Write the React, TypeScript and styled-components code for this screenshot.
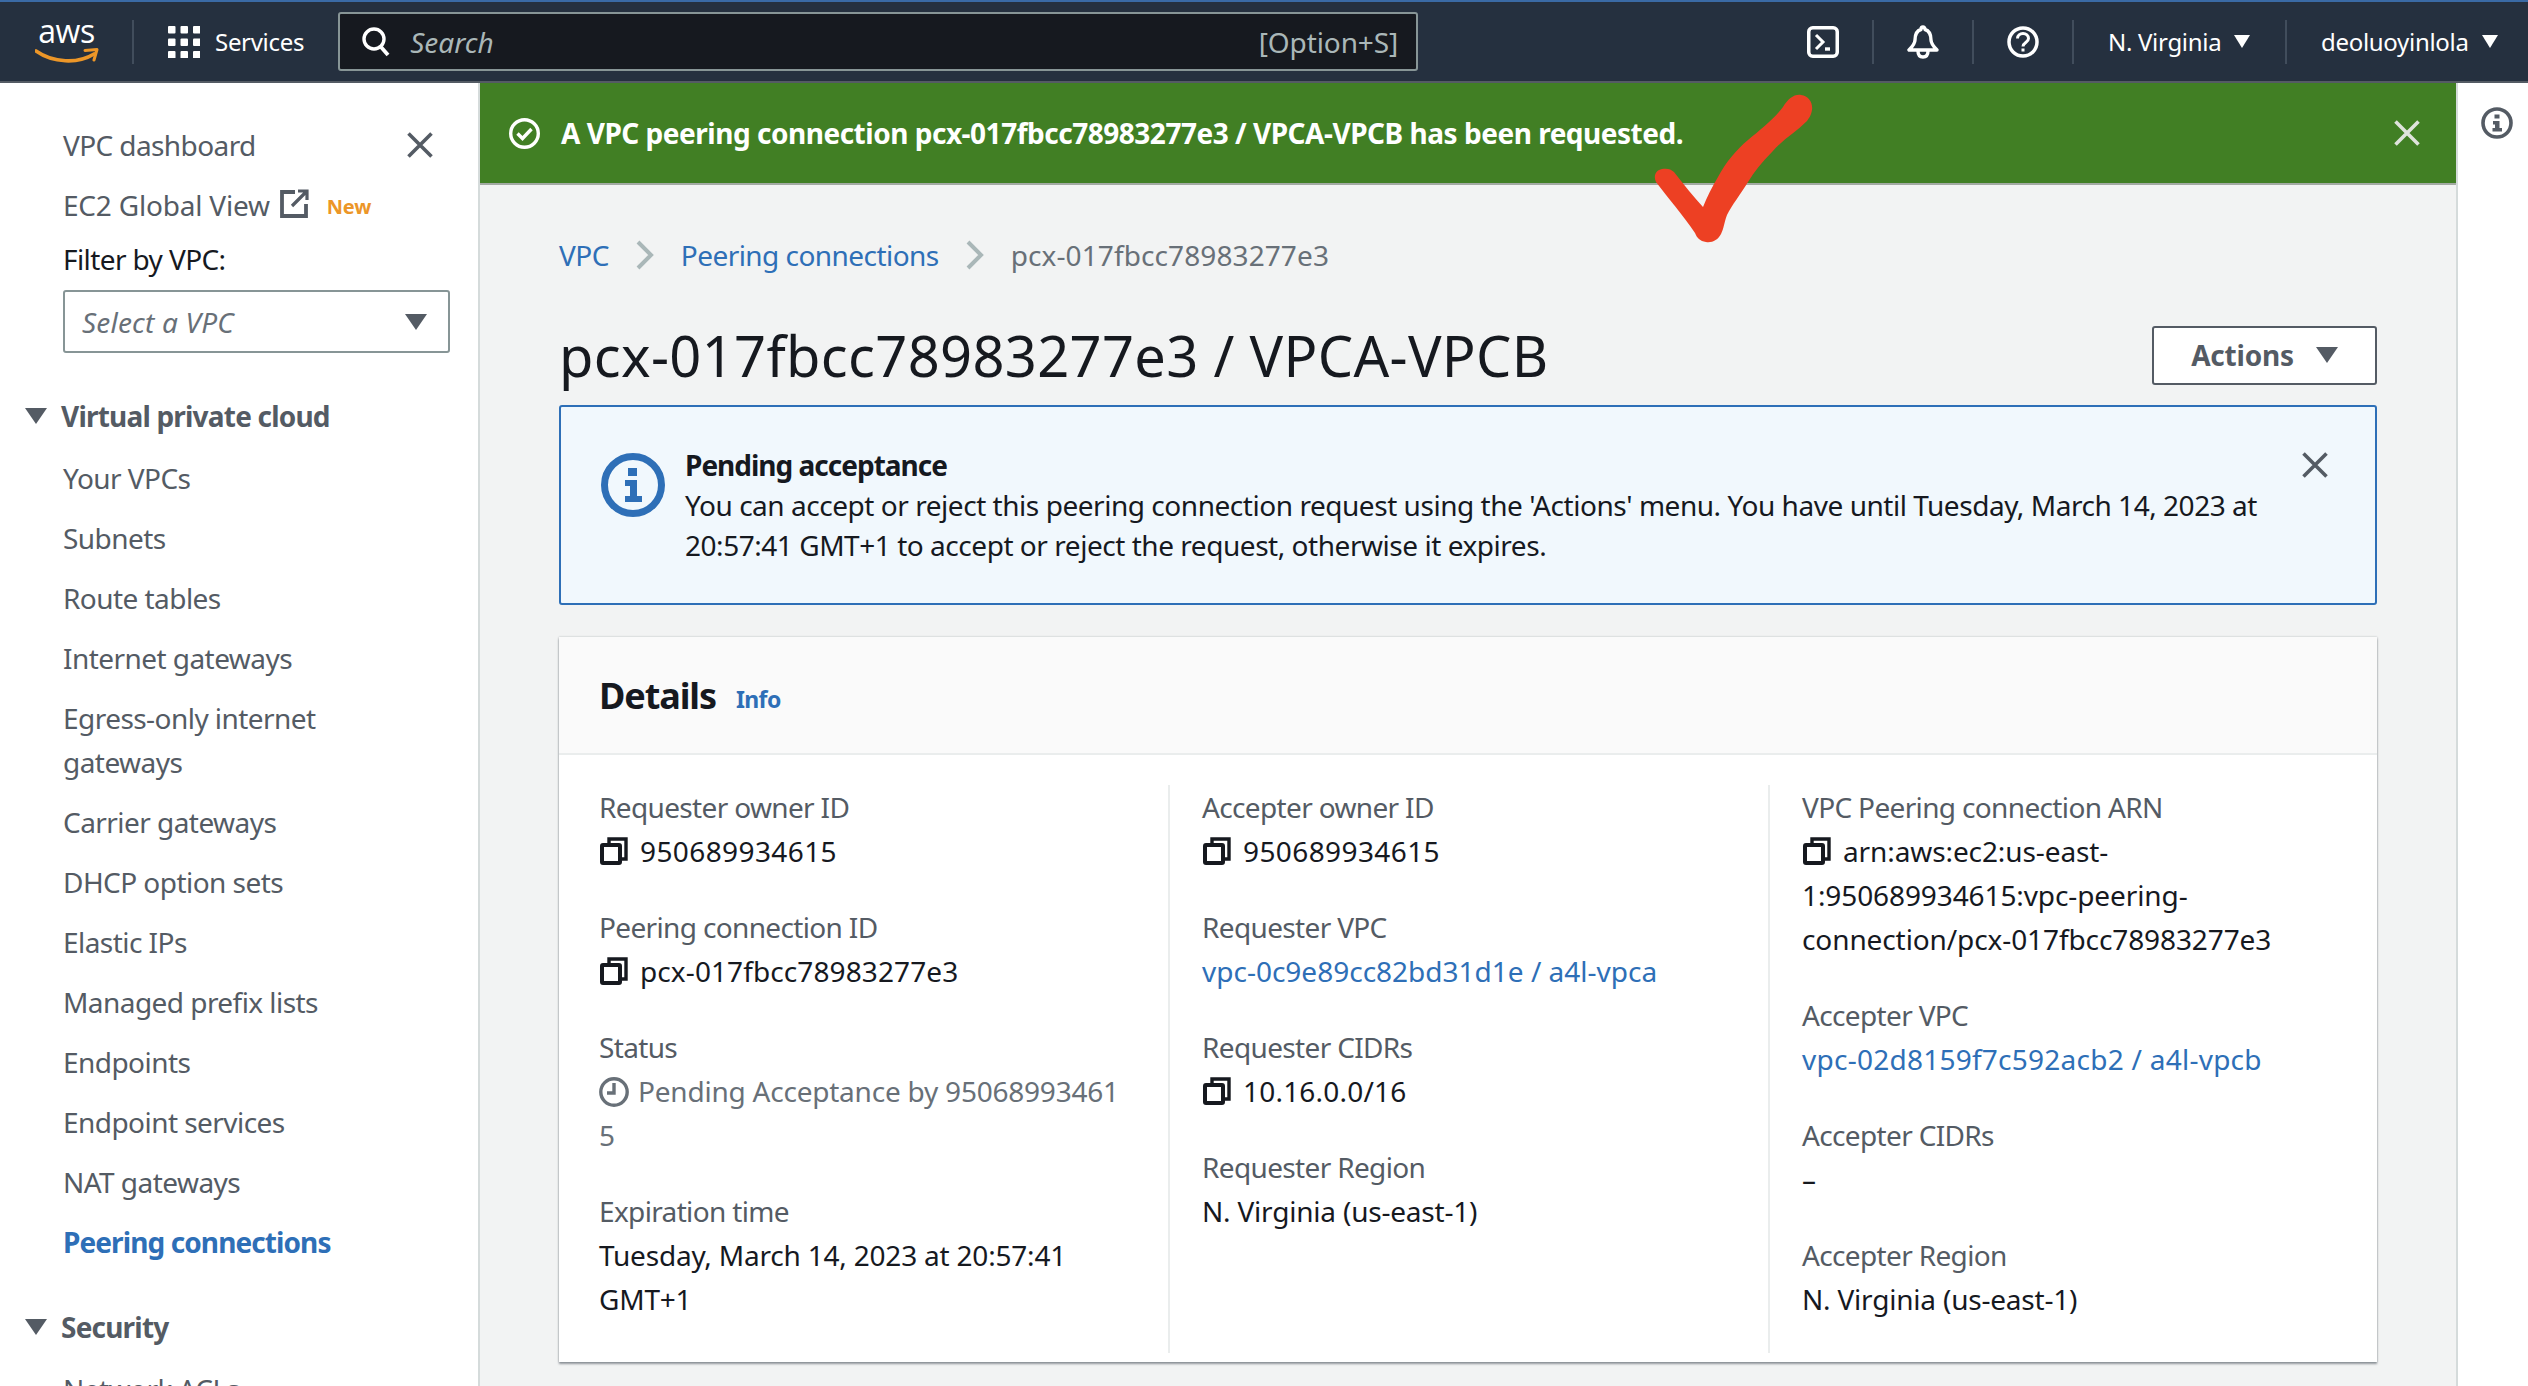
import React from "react";
import styled, { createGlobalStyle } from "styled-components";

const Global = createGlobalStyle`
  html, body { margin: 0; padding: 0; background: #fff; }
  body { font-family: "Noto Sans", "Open Sans", sans-serif; font-size: 28px; line-height: 44px; color: #16191f; letter-spacing: -0.6px; }
  * { box-sizing: border-box; }
`;

const Page = styled.div`
  position: relative;
  width: 2528px;
  height: 1386px;
  overflow: hidden;
  display: flex;
  flex-direction: column;
`;

const Header = styled.header`
  height: 83px;
  flex: none;
  display: flex;
  align-items: center;
  background: #25303f;
  border-top: 2px solid #3a6aa5;
  border-bottom: 2px solid #545b64;
  padding-left: 35px;
  color: #fff;
`;
const Logo = styled.div`
  width: 63px;
  height: 56px;
  flex: none;
  display: flex;
  flex-direction: column;
  align-items: center;
`;
const LogoWord = styled.span`
  font-family: "Open Sans", sans-serif;
  font-size: 32px;
  line-height: 34px;
  letter-spacing: -0.5px;
`;
const HeaderRule = styled.div`
  width: 2px;
  height: 44px;
  flex: none;
  background: #414d5c;
  margin: 0 34px 0 34px;
`;
const ServicesLabel = styled.span`
  font-size: 24px;
  letter-spacing: -0.3px;
  margin: 0 34px 0 15px;
`;
const SearchBox = styled.div`
  width: 1080px;
  height: 59px;
  flex: none;
  background: #16191f;
  border: 2px solid #879596;
  border-radius: 3px;
  display: flex;
  align-items: center;
  padding: 0 18px 0 22px;
`;
const SearchHint = styled.span`
  font-style: italic;
  font-size: 28px;
  letter-spacing: 0;
  color: #aab7b8;
  margin-left: 20px;
  flex: 1;
`;
const SearchKey = styled.span`
  font-size: 28px;
  letter-spacing: -0.1px;
  color: #aab7b8;
`;
const HeaderRight = styled.div`
  margin-left: auto;
  display: flex;
  align-items: center;
  height: 44px;
`;
const IconCell = styled.div`
  width: 100px;
  height: 44px;
  display: flex;
  align-items: center;
  justify-content: center;
  border-right: 2px solid #414d5c;
`;
const MenuCell = styled.div<{ $w: number; $last?: boolean }>`
  width: ${(p) => p.$w}px;
  height: 44px;
  display: flex;
  align-items: center;
  padding-left: 34px;
  font-size: 24px;
  letter-spacing: -0.3px;
  border-right: ${(p) => (p.$last ? "none" : "2px solid #414d5c")};
`;
const HeaderCaret = styled.span`
  width: 0;
  height: 0;
  margin-left: 13px;
  border-left: 8px solid transparent;
  border-right: 8px solid transparent;
  border-top: 13px solid #fff;
`;

const Body = styled.div`
  flex: 1;
  display: flex;
  min-height: 0;
`;

const Sidebar = styled.nav`
  width: 480px;
  flex: none;
  background: #fff;
  border-right: 2px solid #d5dbdb;
  padding: 40px 0 0 63px;
  display: flex;
  flex-direction: column;
  overflow: hidden;
  color: #545b64;
`;
const TopRow = styled.div`
  display: flex;
  align-items: center;
  justify-content: space-between;
  padding-right: 45px;
`;
const GlobalRow = styled.div`
  display: flex;
  align-items: center;
  margin-top: 14px;
  letter-spacing: -0.2px;
`;
const NewTag = styled.span`
  color: #ec9628;
  font-size: 20px;
  font-weight: 700;
  margin: 4px 0 0 18px;
`;
const FilterLabel = styled.div`
  color: #16191f;
  margin-top: 8px;
`;
const VpcSelect = styled.div`
  width: 387px;
  height: 63px;
  flex: none;
  margin-top: 9px;
  background: #fff;
  border: 2px solid #879596;
  border-radius: 3px;
  display: flex;
  align-items: center;
  justify-content: space-between;
  padding: 0 21px 0 17px;
  font-style: italic;
  letter-spacing: 0.2px;
  color: #687078;
`;
const Caret = styled.span<{ $c?: string }>`
  width: 0;
  height: 0;
  flex: none;
  border-left: 11px solid transparent;
  border-right: 11px solid transparent;
  border-top: 16px solid ${(p) => p.$c ?? "#545b64"};
`;
const SectionTitle = styled.div<{ $mt: number }>`
  display: flex;
  align-items: center;
  margin: ${(p) => p.$mt}px 0 18px -38px;
  font-weight: 700;
  letter-spacing: -0.8px;
  gap: 14px;
`;
const NavItem = styled.div<{ $active?: boolean }>`
  margin-bottom: 16px;
  flex: none;
  color: ${(p) => (p.$active ? "#2e6fb7" : "#545b64")};
  font-weight: ${(p) => (p.$active ? 700 : 400)};
  letter-spacing: ${(p) => (p.$active ? "-0.9px" : "-0.55px")};
`;

const Main = styled.main`
  width: 1976px;
  flex: none;
  background: #f2f3f3;
  display: flex;
  flex-direction: column;
`;
const Flash = styled.div`
  height: 102px;
  flex: none;
  background: #417f24;
  color: #fff;
  font-weight: 700;
  letter-spacing: -0.48px;
  display: flex;
  align-items: center;
  padding: 0 36px 0 29px;
  border-bottom: 2px solid #a3aaa3;
`;
const FlashText = styled.span`
  margin-left: 21px;
  flex: 1;
`;
const Content = styled.div`
  padding: 48px 79px 0 79px;
  display: flex;
  flex-direction: column;
`;
const Crumbs = styled.div`
  display: flex;
  align-items: center;
  gap: 27px;
  color: #2e6fb7;
  letter-spacing: -0.55px;
`;
const CrumbCurrent = styled.span`
  color: #687078;
  letter-spacing: 0.1px;
`;
const TitleRow = styled.div`
  margin-top: 43px;
  height: 70px;
  display: flex;
  align-items: center;
  justify-content: space-between;
`;
const PageTitle = styled.h1`
  margin: 0;
  font-size: 56px;
  line-height: 70px;
  font-weight: 400;
  letter-spacing: 0.34px;
  color: #16191f;
`;
const ActionsButton = styled.div`
  width: 225px;
  height: 59px;
  background: #fff;
  border: 2px solid #545b64;
  border-radius: 3px;
  display: flex;
  align-items: center;
  justify-content: center;
  gap: 22px;
  font-weight: 700;
  letter-spacing: -0.2px;
  color: #545b64;
`;
const Alert = styled.section`
  margin-top: 15px;
  height: 200px;
  background: #f1f8fd;
  border: 2px solid #2e6fb7;
  border-radius: 3px;
  display: flex;
  align-items: flex-start;
  padding: 38px 47px 0 40px;
`;
const AlertIcon = styled.svg`
  margin-top: 8px;
  flex: none;
`;
const AlertBody = styled.div`
  margin-left: 20px;
  flex: 1;
  line-height: 40px;
  letter-spacing: -0.46px;
  white-space: nowrap;
`;
const AlertTitle = styled.div`
  font-weight: 700;
  letter-spacing: -1px;
`;
const AlertClose = styled.div`
  margin-top: 7px;
  display: flex;
`;
const Card = styled.section`
  margin-top: 32px;
  height: 725px;
  background: #fff;
  box-shadow: 0 2px 2px rgba(84, 91, 100, 0.6), 0 0 2px rgba(0, 28, 36, 0.25);
  display: flex;
  flex-direction: column;
`;
const CardHead = styled.div`
  height: 118px;
  flex: none;
  background: #fafafa;
  border-bottom: 2px solid #eaeded;
  display: flex;
  align-items: center;
  padding: 2px 0 0 40px;
  gap: 20px;
`;
const CardTitle = styled.h2`
  margin: 0;
  font-size: 36px;
  font-weight: 700;
  letter-spacing: -1.1px;
  color: #16191f;
`;
const InfoLink = styled.span`
  color: #2e6fb7;
  font-size: 23px;
  font-weight: 700;
  margin-top: 6px;
`;
const Columns = styled.div`
  display: grid;
  grid-template-columns: 609px 600px 1fr;
  margin-top: 30px;
  height: 536px;
`;
const Column = styled.div<{ $first?: boolean }>`
  padding-left: ${(p) => (p.$first ? 40 : 32)}px;
  border-left: ${(p) => (p.$first ? "none" : "2px solid #eaeded")};
`;
const Field = styled.div`
  margin-bottom: 32px;
`;
const FieldLabel = styled.div`
  color: #545b64;
  letter-spacing: -0.65px;
`;
const FieldValue = styled.div<{ $ls?: number }>`
  color: #16191f;
  white-space: nowrap;
  letter-spacing: ${(p) => p.$ls ?? -0.2}px;
`;
const FieldLink = styled.div<{ $ls?: number }>`
  color: #2e6fb7;
  letter-spacing: ${(p) => p.$ls ?? 0}px;
`;
const CopyGlyph = styled.svg`
  vertical-align: -3px;
  margin: 0 12px 0 1px;
`;
const StatusText = styled.div`
  color: #687078;
  white-space: nowrap;
  letter-spacing: -0.22px;
`;
const StatusGlyph = styled.svg`
  vertical-align: -5px;
  margin-right: 9px;
`;
const HelpRail = styled.aside`
  flex: 1;
  background: #fff;
  border-left: 2px solid #d5dbdb;
  display: flex;
  justify-content: center;
  padding: 24px 0 0 8px;
`;
const RedCheck = styled.svg`
  position: absolute;
  left: 1650px;
  top: 90px;
`;
const ExternalGlyph = styled.svg`
  margin-left: 10px;
  margin-top: -4px;
`;

const Close = ({ c = "#545b64", s = 26 }: { c?: string; s?: number }) => (
  <svg width={s} height={s} viewBox="0 0 26 26" fill="none">
    <path d="M1.500 1.500 24.500 24.500M24.500 1.500 1.500 24.500" stroke={c} strokeWidth="3.600" />
  </svg>
);
const Chevron = () => (
  <svg width="18" height="30" viewBox="0 0 18 30" fill="none">
    <path d="M2 2 15 15 2 28" stroke="#aab7b8" strokeWidth="4" />
  </svg>
);
const Copy = () => (
  <CopyGlyph width="28" height="28" viewBox="0 0 28 28" fill="none">
    <path d="M9 7V2h17v20h-6" stroke="#16191f" strokeWidth="3.400" />
    <rect x="2" y="8" width="18" height="18" stroke="#16191f" strokeWidth="4" rx="1" />
  </CopyGlyph>
);

const navItems = [
  "Your VPCs",
  "Subnets",
  "Route tables",
  "Internet gateways",
  "Egress-only internet gateways",
  "Carrier gateways",
  "DHCP option sets",
  "Elastic IPs",
  "Managed prefix lists",
  "Endpoints",
  "Endpoint services",
  "NAT gateways",
];

export default function App() {
  return (
    <Page>
      <Global />
      <Header>
        <Logo>
          <LogoWord>aws</LogoWord>
          <svg width="64" height="18" viewBox="0 0 64 18" fill="none">
            <path d="M1 3c17 12 42 13 58 3" stroke="#ec9628" strokeWidth="3.600" strokeLinecap="round" />
            <path d="M50 2.500 62 1.500 59 12" stroke="#ec9628" strokeWidth="3" strokeLinecap="round" strokeLinejoin="round" />
          </svg>
        </Logo>
        <HeaderRule />
        <svg width="32" height="32" viewBox="0 0 32 32" fill="#fff">
          {[0, 12.5, 25].flatMap((y) =>
            [0, 12.5, 25].map((x) => <rect key={`${x}-${y}`} x={x} y={y} width="7.500" height="7.500" rx="1" />)
          )}
        </svg>
        <ServicesLabel>Services</ServicesLabel>
        <SearchBox>
          <svg width="28" height="30" viewBox="0 0 28 30" fill="none">
            <circle cx="12" cy="12" r="10" stroke="#fff" strokeWidth="3.400" />
            <path d="M19 20l7 8" stroke="#fff" strokeWidth="3.800" />
          </svg>
          <SearchHint>Search</SearchHint>
          <SearchKey>[Option+S]</SearchKey>
        </SearchBox>
        <HeaderRight>
          <IconCell>
            <svg width="32" height="32" viewBox="0 0 32 32" fill="none">
              <rect x="1.750" y="1.750" width="28.500" height="28.500" rx="4" stroke="#fff" strokeWidth="3.500" />
              <path d="M9 9l7 7-7 7" stroke="#fff" strokeWidth="3" />
              <path d="M18 23h5" stroke="#fff" strokeWidth="3.400" />
            </svg>
          </IconCell>
          <IconCell>
            <svg width="32" height="34" viewBox="0 0 32 34" fill="none">
              <path d="M16 2c-1 0-2 1-2 2.500C9 6 8 10 8 15c0 4-3 7-6 10h28c-3-3-6-6-6-10 0-5-1-9-6-10.500C18 3 17 2 16 2Z" stroke="#fff" strokeWidth="3.400" strokeLinejoin="round" />
              <path d="M11 26c0 4 2 6 5 6s5-2 5-6" stroke="#fff" strokeWidth="3.400" />
            </svg>
          </IconCell>
          <IconCell>
            <svg width="32" height="32" viewBox="0 0 32 32" fill="none">
              <circle cx="16" cy="16" r="14" stroke="#fff" strokeWidth="3.500" />
              <path d="M10.500 12.500c0-3 2.500-5 5.500-5s5.500 2 5.500 5c0 4-5.500 4-5.500 8" stroke="#fff" strokeWidth="3" />
              <rect x="14.500" y="22.500" width="3" height="3" fill="#fff" />
            </svg>
          </IconCell>
          <MenuCell $w={213}>
            N. Virginia
            <HeaderCaret />
          </MenuCell>
          <MenuCell $w={241} $last>
            deoluoyinlola
            <HeaderCaret />
          </MenuCell>
        </HeaderRight>
      </Header>
      <Body>
        <Sidebar>
          <TopRow>
            VPC dashboard
            <Close />
          </TopRow>
          <GlobalRow>
            EC2 Global View
            <ExternalGlyph width="29" height="29" viewBox="0 0 29 29" fill="none">
              <path d="M15 3H2v24h24V15" stroke="#545b64" strokeWidth="3.800" />
              <path d="M18 2h9v9M27 2 12 17" stroke="#545b64" strokeWidth="3.200" />
            </ExternalGlyph>
            <NewTag>New</NewTag>
          </GlobalRow>
          <FilterLabel>Filter by VPC:</FilterLabel>
          <VpcSelect>
            Select a VPC
            <Caret />
          </VpcSelect>
          <SectionTitle $mt={41}>
            <Caret />
            Virtual private cloud
          </SectionTitle>
          {navItems.map((n) => (
            <NavItem key={n}>{n === "Egress-only internet gateways" ? <>Egress-only internet<br />gateways</> : n}</NavItem>
          ))}
          <NavItem $active>Peering connections</NavItem>
          <SectionTitle $mt={25}>
            <Caret />
            Security
          </SectionTitle>
          <NavItem>Network ACLs</NavItem>
        </Sidebar>
        <Main>
          <Flash>
            <svg width="31" height="31" viewBox="0 0 31 31" fill="none">
              <circle cx="15.500" cy="15.500" r="13.800" stroke="#fff" strokeWidth="3.400" />
              <path d="M8.500 15.500l5 5 9-9.500" stroke="#fff" strokeWidth="3.400" />
            </svg>
            <FlashText>A VPC peering connection pcx-017fbcc78983277e3 / VPCA-VPCB has been requested.</FlashText>
            <Close c="#dfe3dc" />
          </Flash>
          <Content>
            <Crumbs>
              <span>VPC</span>
              <Chevron />
              <span>Peering connections</span>
              <Chevron />
              <CrumbCurrent>pcx-017fbcc78983277e3</CrumbCurrent>
            </Crumbs>
            <TitleRow>
              <PageTitle>pcx-017fbcc78983277e3 / VPCA-VPCB</PageTitle>
              <ActionsButton>
                Actions
                <Caret />
              </ActionsButton>
            </TitleRow>
            <Alert>
              <AlertIcon width="64" height="64" viewBox="0 0 64 64" fill="none">
                <circle cx="32" cy="32" r="28.500" stroke="#2e6fb7" strokeWidth="7" />
                <rect x="27" y="15" width="9" height="8" fill="#2e6fb7" />
                <path d="M24 27h12v16h5v6H24v-6h5V33h-5Z" fill="#2e6fb7" />
              </AlertIcon>
              <AlertBody>
                <AlertTitle>Pending acceptance</AlertTitle>
                You can accept or reject this peering connection request using the 'Actions' menu. You have until Tuesday, March 14, 2023 at
                <br />
                20:57:41 GMT+1 to accept or reject the request, otherwise it expires.
              </AlertBody>
              <AlertClose>
                <Close />
              </AlertClose>
            </Alert>
            <Card>
              <CardHead>
                <CardTitle>Details</CardTitle>
                <InfoLink>Info</InfoLink>
              </CardHead>
              <Columns>
                <Column $first>
                  <Field>
                    <FieldLabel>Requester owner ID</FieldLabel>
                    <FieldValue $ls={0.4}><Copy />950689934615</FieldValue>
                  </Field>
                  <Field>
                    <FieldLabel>Peering connection ID</FieldLabel>
                    <FieldValue $ls={0.1}><Copy />pcx-017fbcc78983277e3</FieldValue>
                  </Field>
                  <Field>
                    <FieldLabel>Status</FieldLabel>
                    <StatusText>
                      <StatusGlyph width="30" height="30" viewBox="0 0 30 30" fill="none">
                        <circle cx="15" cy="15" r="13.200" stroke="#687078" strokeWidth="3.400" />
                        <path d="M15 6v10H8" stroke="#687078" strokeWidth="3.400" />
                      </StatusGlyph>
                      Pending Acceptance by 95068993461
                      <br />5
                    </StatusText>
                  </Field>
                  <Field>
                    <FieldLabel>Expiration time</FieldLabel>
                    <FieldValue>Tuesday, March 14, 2023 at 20:57:41<br />GMT+1</FieldValue>
                  </Field>
                </Column>
                <Column>
                  <Field>
                    <FieldLabel>Accepter owner ID</FieldLabel>
                    <FieldValue $ls={0.4}><Copy />950689934615</FieldValue>
                  </Field>
                  <Field>
                    <FieldLabel>Requester VPC</FieldLabel>
                    <FieldLink>vpc-0c9e89cc82bd31d1e / a4l-vpca</FieldLink>
                  </Field>
                  <Field>
                    <FieldLabel>Requester CIDRs</FieldLabel>
                    <FieldValue $ls={0.2}><Copy />10.16.0.0/16</FieldValue>
                  </Field>
                  <Field>
                    <FieldLabel>Requester Region</FieldLabel>
                    <FieldValue>N. Virginia (us-east-1)</FieldValue>
                  </Field>
                </Column>
                <Column>
                  <Field>
                    <FieldLabel>VPC Peering connection ARN</FieldLabel>
                    <FieldValue $ls={-0.1}>
                      <Copy />arn:aws:ec2:us-east-<br />1:950689934615:vpc-peering-<br />connection/pcx-017fbcc78983277e3
                    </FieldValue>
                  </Field>
                  <Field>
                    <FieldLabel>Accepter VPC</FieldLabel>
                    <FieldLink $ls={0.25}>vpc-02d8159f7c592acb2 / a4l-vpcb</FieldLink>
                  </Field>
                  <Field>
                    <FieldLabel>Accepter CIDRs</FieldLabel>
                    <FieldValue>–</FieldValue>
                  </Field>
                  <Field>
                    <FieldLabel>Accepter Region</FieldLabel>
                    <FieldValue>N. Virginia (us-east-1)</FieldValue>
                  </Field>
                </Column>
              </Columns>
            </Card>
          </Content>
        </Main>
        <HelpRail>
          <svg width="32" height="32" viewBox="0 0 32 32" fill="none">
            <circle cx="16" cy="16" r="14" stroke="#545b64" strokeWidth="3.600" />
            <rect x="13.500" y="7.500" width="5" height="4" fill="#545b64" />
            <path d="M12 14h6.500v7H21v3.500H11.500V21h2.500v-3.500H12Z" fill="#545b64" />
          </svg>
        </HelpRail>
      </Body>
      <RedCheck width="170" height="160" viewBox="0 0 170 160">
        <path
          d="M133 17C138 9 144 4 151 5C159 6 163 13 162 20C161 26 159 28 157 31C146 42 132 50 122 62C112 72 104 82 98 92C90 105 82 115 77 125C74 133 74 138 71 144C68 150 62 153 56 152C50 151 47 148 45 143C33 125 18 108 6 92C3 86 6 80 12 79C17 78 21 79 24 82C34 95 44 107 53 117C57 107 62 97 68 87C76 72 86 60 98 50C110 40 124 29 133 17Z"
          fill="#ed4023"
        />
      </RedCheck>
    </Page>
  );
}
